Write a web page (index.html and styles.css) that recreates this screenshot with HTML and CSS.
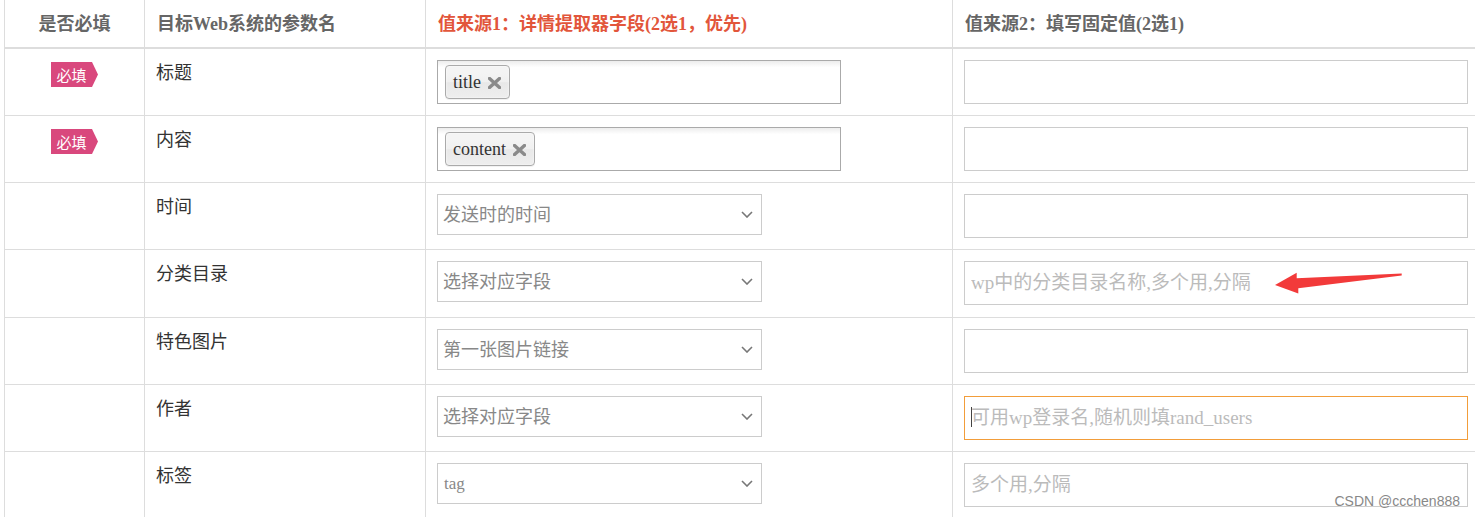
FILE: index.html
```html
<!DOCTYPE html>
<html lang="zh-CN">
<head>
<meta charset="utf-8">
<title>参数映射</title>
<link rel="stylesheet" href="styles.css">
</head>
<body>
<div class="page">
  <div class="grid">
    <div class="row head">
      <div class="cell c1">是否必填</div>
      <div class="cell">目标Web系统的参数名</div>
      <div class="cell accent">值来源1：详情提取器字段(2选1，优先)</div>
      <div class="cell">值来源2：填写固定值(2选1)</div>
    </div>

    <div class="row">
      <div class="cell c1"><span class="badge">必填</span></div>
      <div class="cell name">标题</div>
      <div class="cell"><div class="chosen"><span class="chip">title<svg class="x" viewBox="0 0 13 12" width="13" height="12"><path d="M1.5 1.5 L11.5 10.5 M11.5 1.5 L1.5 10.5" stroke="#8a8a8a" stroke-width="3.4" stroke-linecap="round"/></svg></span></div></div>
      <div class="cell"><input class="field" type="text"></div>
    </div>

    <div class="row">
      <div class="cell c1"><span class="badge">必填</span></div>
      <div class="cell name">内容</div>
      <div class="cell"><div class="chosen"><span class="chip">content<svg class="x" viewBox="0 0 13 12" width="13" height="12"><path d="M1.5 1.5 L11.5 10.5 M11.5 1.5 L1.5 10.5" stroke="#8a8a8a" stroke-width="3.4" stroke-linecap="round"/></svg></span></div></div>
      <div class="cell"><input class="field" type="text"></div>
    </div>

    <div class="row">
      <div class="cell c1"></div>
      <div class="cell name">时间</div>
      <div class="cell"><div class="select"><span>发送时的时间</span><svg viewBox="0 0 12 7" width="12" height="7"><path d="M1 1 L6 6 L11 1" fill="none" stroke="#777" stroke-width="1.6"/></svg></div></div>
      <div class="cell"><input class="field" type="text"></div>
    </div>

    <div class="row tall">
      <div class="cell c1"></div>
      <div class="cell name">分类目录</div>
      <div class="cell"><div class="select"><span>选择对应字段</span><svg viewBox="0 0 12 7" width="12" height="7"><path d="M1 1 L6 6 L11 1" fill="none" stroke="#777" stroke-width="1.6"/></svg></div></div>
      <div class="cell"><input class="field" type="text" placeholder="wp中的分类目录名称,多个用,分隔"></div>
    </div>

    <div class="row">
      <div class="cell c1"></div>
      <div class="cell name">特色图片</div>
      <div class="cell"><div class="select"><span>第一张图片链接</span><svg viewBox="0 0 12 7" width="12" height="7"><path d="M1 1 L6 6 L11 1" fill="none" stroke="#777" stroke-width="1.6"/></svg></div></div>
      <div class="cell"><input class="field" type="text"></div>
    </div>

    <div class="row">
      <div class="cell c1"></div>
      <div class="cell name">作者</div>
      <div class="cell"><div class="select"><span>选择对应字段</span><svg viewBox="0 0 12 7" width="12" height="7"><path d="M1 1 L6 6 L11 1" fill="none" stroke="#777" stroke-width="1.6"/></svg></div></div>
      <div class="cell"><div class="field-wrap"><input class="field focused" type="text" placeholder="可用wp登录名,随机则填rand_users"><span class="caret"></span></div></div>
    </div>

    <div class="row">
      <div class="cell c1"></div>
      <div class="cell name">标签</div>
      <div class="cell"><div class="select"><span class="latin">tag</span><svg viewBox="0 0 12 7" width="12" height="7"><path d="M1 1 L6 6 L11 1" fill="none" stroke="#777" stroke-width="1.6"/></svg></div></div>
      <div class="cell"><input class="field" type="text" placeholder="多个用,分隔"></div>
    </div>
  </div>

  <svg class="arrow" viewBox="0 0 140 35" width="140" height="35">
    <polygon points="5,20 26.7,7.7 26.7,13.3 131.7,8.5 131.7,10.5 28.3,23.3 28.3,28.5" fill="#f23a3a"/>
  </svg>
  <div class="watermark">CSDN @ccchen888</div>
</div>
</body>
</html>
```

FILE: styles.css
```css
html, body {
  margin: 0;
  padding: 0;
  background: #fff;
  overflow: hidden;
}

.page {
  position: relative;
  width: 1475px;
  height: 517px;
  overflow: hidden;
  font-family: "Liberation Serif", "Noto Sans CJK SC", serif;
  font-size: 18px;
  color: #333;
}

.grid {
  margin-left: 4px;
  width: 1475px;
}

.row {
  display: grid;
  grid-template-columns: 140px 281px 527px 527px;
  height: 67px;
  box-sizing: border-box;
  border-bottom: 1px solid #ddd;
}

.row.tall {
  height: 68px;
}

.cell {
  border-left: 1px solid #ddd;
  padding: 11px;
  box-sizing: border-box;
  line-height: 24px;
}

.c1 {
  text-align: center;
}

.head {
  height: 49px;
  border-bottom: 2px solid #ddd;
}

.head .cell {
  display: flex;
  align-items: center;
  padding: 1px 11px 0 12px;
  font-weight: bold;
  color: #666;
}

.head .c1 {
  justify-content: center;
  padding-left: 0;
  padding-right: 0;
}

.head .accent {
  color: #e2563b;
}

.name {
  padding-top: 12px;
  color: #333;
}

.badge {
  display: inline-block;
  margin-top: 2px;
  width: 47px;
  height: 25px;
  padding-right: 6px;
  box-sizing: border-box;
  background: #d9487d;
  clip-path: polygon(0 0, 41px 0, 47px 50%, 41px 100%, 0 100%);
  color: #fff;
  font-family: "Noto Sans CJK SC", sans-serif;
  font-size: 15px;
  line-height: 25px;
  text-align: center;
}

.chosen {
  width: 404px;
  height: 44px;
  box-sizing: border-box;
  border: 1px solid #aaa;
  background: linear-gradient(#eee 1%, #fff 15%);
  padding: 4px 7px;
  display: flex;
  align-items: flex-start;
}

.chip {
  display: inline-flex;
  align-items: center;
  gap: 7px;
  height: 34px;
  box-sizing: border-box;
  padding: 0 8px 0 7px;
  border: 1px solid #aaa;
  border-radius: 4px;
  background: linear-gradient(#f4f4f4 20%, #f0f0f0 50%, #e8e8e8 52%, #eee 100%);
  box-shadow: 0 0 2px #fff inset, 0 1px 0 rgba(0, 0, 0, 0.05);
  color: #333;
  font-size: 18px;
  line-height: 32px;
}

.chip .x {
  display: block;
  margin-top: 1px;
}

.select {
  width: 325px;
  height: 41px;
  box-sizing: border-box;
  border: 1px solid #ccc;
  padding: 0 8px 0 5px;
  display: flex;
  align-items: center;
  justify-content: space-between;
  color: #888;
  font-size: 18px;
  background: #fff;
}

.select svg {
  display: block;
}

.select .latin {
  font-size: 17px;
  padding-left: 1px;
}

.field-wrap {
  position: relative;
}

.field {
  display: block;
  width: 504px;
  height: 44px;
  box-sizing: border-box;
  margin: 0;
  border: 1px solid #ccc;
  border-radius: 0;
  padding: 0 6px;
  font-family: "Liberation Serif", "Noto Sans CJK SC", serif;
  font-size: 19px;
  color: #333;
  background: #fff;
  outline: none;
}

.field::placeholder {
  color: #bbb;
}

.field.focused {
  border-color: #f29d3a;
}

.caret {
  position: absolute;
  left: 7px;
  top: 11px;
  width: 1px;
  height: 20px;
  background: #444;
}

.arrow {
  position: absolute;
  left: 1270px;
  top: 265px;
}

.watermark {
  position: absolute;
  right: 15px;
  top: 493px;
  font-family: "Liberation Sans", Arial, sans-serif;
  font-size: 14px;
  line-height: 16px;
  color: #888;
  text-shadow: 0 0 1px #fff;
}
```
